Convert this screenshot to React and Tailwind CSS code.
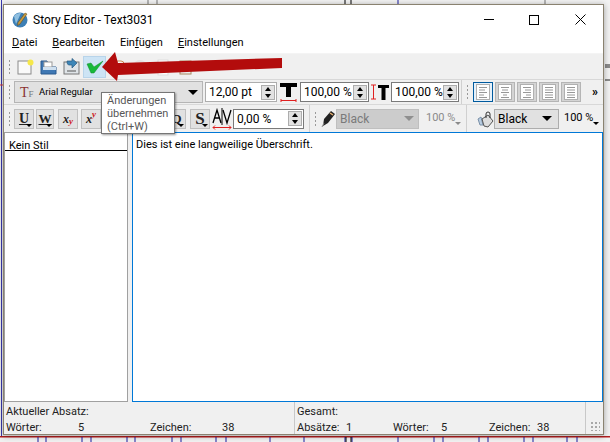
import React from 'react';

const Grip = () => (
  <div className="w-[3px] h-[16px] mx-[4px] shrink-0 bg-[radial-gradient(circle,#9a9a9a_1px,transparent_1px)] bg-[length:3px_4px]" />
);

const Spin = () => (
  <div className="w-[14px] h-[15px] ml-auto mr-[1px] shrink-0 flex flex-col items-center justify-center gap-[3px] bg-[#e1e1e1] border border-[#adadad]">
    <div className="w-0 h-0 border-x-[3.5px] border-x-transparent border-b-[4px] border-b-black" />
    <div className="w-0 h-0 border-x-[3.5px] border-x-transparent border-t-[4px] border-t-black" />
  </div>
);

const SpinInput = ({ value, className }) => (
  <div className={`h-[20px] flex items-center pl-[3px] bg-white border border-[#7a7a7a] text-[12px] text-black whitespace-nowrap ${className}`}>
    <span>{value}</span>
    <Spin />
  </div>
);

const AlignBtn = ({ lines, active, className }) => (
  <div className={`w-[20px] h-[20px] flex items-center justify-center border ${active ? 'bg-[#e5f1fb] border-[#005a9e] border-[1.5px]' : 'bg-[#d4d4d4] border-[#b5b5b5]'} ${className}`}>
    <svg width="14" height="16" viewBox="0 0 14 16">
      <rect x="0.5" y="0.5" width="13" height="15" fill="#fff" stroke="#b0b0b0" />
      {lines.map(([x1, x2], i) => (
        <line key={i} x1={x1} x2={x2} y1={3.5 + i * 2.5} y2={3.5 + i * 2.5} stroke="#8c8c8c" strokeWidth="0.9" />
      ))}
    </svg>
  </div>
);

const StyleBtn = ({ children, className, caret }) => (
  <div className={`h-[20px] flex items-center justify-center bg-[#e1e1e1] border border-[#c0c0c0] font-['Liberation_Serif',serif] font-bold text-[#222] relative ${className}`}>
    {children}
    {caret && (
      <div className="absolute right-[1px] bottom-[1px] w-0 h-0 border-x-[3px] border-x-transparent border-t-[3px] border-t-black" />
    )}
  </div>
);

const Caret = ({ color = 'border-t-black', className = '' }) => (
  <div className={`w-0 h-0 border-x-[5px] border-x-transparent border-t-[5px] ${color} ${className}`} />
);

const Divider = ({ className }) => <div className={`w-px self-stretch bg-[#d0d0d0] ${className}`} />;

function App() {
  return (
    <div className="relative w-[610px] h-[442px] overflow-hidden bg-[#f2f2f2] font-['Roboto',sans-serif]">
      {/* page behind the window, rulers and guides */}
      <svg className="absolute inset-0" width="610" height="442">
        <line x1="0" x2="610" y1="436.5" y2="436.5" stroke="#b02020" />
        <line x1="0" x2="610" y1="437.5" y2="437.5" stroke="#d88" />
        {[38, 46, 82, 91, 127, 135, 172, 181, 216, 226, 270, 304, 345, 352, 398, 434, 443, 479, 488, 524, 533, 567, 577].map((x) => (
          <line key={x} x1={x} x2={x} y1="437" y2="442" stroke="#1a1aa0" />
        ))}
        <line x1="346" x2="346" y1="437" y2="442" stroke="#000" />
        <line x1="351" x2="351" y1="437" y2="442" stroke="#000" />
        <line x1="1.5" x2="1.5" y1="0" y2="436" stroke="#3a3ab0" />
        <line x1="148" x2="148" y1="0" y2="4" stroke="#777" />
        <line x1="157" x2="157" y1="0" y2="4" stroke="#777" />
        <line x1="345" x2="345" y1="0" y2="4" stroke="#000" />
        <line x1="351" x2="351" y1="0" y2="4" stroke="#000" />
        <line x1="398" x2="398" y1="0" y2="4" stroke="#1a1aa0" />
        <line x1="545" x2="545" y1="0" y2="4" stroke="#777" />
        <line x1="605" x2="610" y1="65" y2="65" stroke="#222" />
        <line x1="605" x2="610" y1="67" y2="67" stroke="#222" />
        <line x1="605" x2="610" y1="80" y2="80" stroke="#222" />
        <line x1="0" x2="3" y1="85" y2="85" stroke="#d33" />
      </svg>

      <div className="relative ml-[3px] mt-[4px] w-[601px] h-[431px] flex flex-col bg-[#f0f0f0] border border-[#8a8270] shadow-[0_1px_6px_rgba(0,0,0,0.35)]">
        {/* title bar */}
        <div className="h-[29px] shrink-0 bg-white flex items-center text-[12px] text-black">
          <svg className="ml-[8px] mr-[5px]" width="16" height="16" viewBox="0 0 16 16">
            <circle cx="8" cy="8" r="7.5" fill="#3d7fb5" />
            <path d="M2 4 A7.5 7.5 0 0 1 9 1 L4 12 Z" fill="#8fbfe0" />
            <path d="M13 1 L15 2 L8 12 L5.5 13.5 L6 10.5 Z" fill="#c89a40" stroke="#5a4410" strokeWidth="0.5" />
          </svg>
          <span>Story Editor - Text3031</span>
          <div className="ml-auto flex items-center">
            <div className="w-[10px] h-px bg-black mr-[35px]" />
            <div className="w-[10px] h-[10px] border border-black mr-[36px]" />
            <svg className="mr-[17px]" width="11" height="11" viewBox="0 0 11 11">
              <path d="M0.5 0.5 L10.5 10.5 M10.5 0.5 L0.5 10.5" stroke="#000" />
            </svg>
          </div>
        </div>

        {/* menu */}
        <div className="h-[20px] shrink-0 bg-white flex items-center pl-[8px] gap-[15px] text-[11px] text-black border-b border-[#f4f4f4]">
          <span><u>D</u>atei</span>
          <span><u>B</u>earbeiten</span>
          <span>Ein<u>f</u>ügen</span>
          <span><u>E</u>instellungen</span>
        </div>

        {/* toolbar 1 */}
        <div className="h-[26px] shrink-0 flex items-center border-b border-[#d8d8d8]">
          <Grip />
          <svg className="ml-[2px]" width="17" height="16" viewBox="0 0 17 16">
            <rect x="1" y="2" width="13" height="13" fill="#fafafa" stroke="#8a8a8a" />
            <circle cx="13.5" cy="3.5" r="3" fill="#f6e84a" />
          </svg>
          <svg className="ml-[6px]" width="17" height="16" viewBox="0 0 17 16">
            <path d="M1 2 H7 L8 4 H11 V8 H16 V15 H1 Z" fill="#3f78b4" stroke="#2a5a90" />
            <rect x="4" y="3" width="8" height="5" fill="#fff" stroke="#999" />
            <rect x="3" y="8" width="13" height="3" fill="#cfe0f0" />
          </svg>
          <svg className="ml-[6px]" width="17" height="17" viewBox="0 0 17 17">
            <rect x="1" y="4" width="15" height="12" fill="#dfe4e8" stroke="#777" />
            <path d="M4 3 H9 V0.5 L14 5 L9 10 V7 H6 C5 7 4 6 4 3 Z" fill="#3d86b8" stroke="#2a5a80" strokeWidth="0.7" />
            <path d="M4 13 H13" stroke="#555" />
          </svg>
          <div className="ml-[3px] w-[23px] h-[22px] flex items-center justify-center bg-[#cde4f5] border border-[#b8d4ea]">
            <svg width="18" height="15" viewBox="0 0 18 15">
              <path d="M1 5 L5 4 L8 8 L17 2 L8 14 L5 14 Z" fill="#17b93a" stroke="#128a2c" strokeWidth="0.5" />
            </svg>
          </div>
          {/* greyed tools mostly hidden by the arrow */}
          <svg className="ml-[8px]" width="85" height="20" viewBox="0 0 85 20">
            <rect x="1" y="4" width="9" height="12" rx="3" fill="#fff" stroke="#c88a50" />
            <circle cx="26" cy="10" r="7" fill="#e4e4e4" />
            <rect x="44" y="3" width="10" height="15" fill="#fff" stroke="#ddd" />
            <rect x="66" y="4" width="11" height="13" fill="#eee" stroke="#a88860" />
          </svg>
        </div>

        {/* toolbar 2 */}
        <div className="h-[25px] shrink-0 flex items-center border-b border-[#d8d8d8]">
          <Grip />
          <div className="-ml-[1px] w-[189px] h-[22px] flex items-center bg-[#e1e1e1] border border-[#b5b5b5] text-[9.5px] text-black">
            <span className="ml-[5px] w-[19px] font-['Liberation_Serif',serif] text-[14px] text-[#8a3030]">T<span className="text-[9px] text-[#777]">F</span></span>
            <span>Arial Regular</span>
            <Caret className="ml-auto mr-[4px]" />
          </div>
          <SpinInput value="12,00 pt" className="ml-[2px] w-[72px] border-[#adadad]" />
          <div className="w-[23px] h-[20px] flex items-center justify-center">
            <svg width="17" height="20" viewBox="0 0 17 20">
              <path d="M0 1 H17 V5 H11 V15 H6 V5 H0 Z" fill="#000" />
              <path d="M1 17 V20 M16 17 V20 M1 18.5 H16" stroke="#e02020" fill="none" />
            </svg>
          </div>
          <SpinInput value="100,00 %" className="w-[69px]" />
          <div className="w-[22px] h-[20px] flex items-center justify-center">
            <svg width="20" height="18" viewBox="0 0 20 18">
              <path d="M1 2 H6 M3.5 2 V16 M1 16 H6" stroke="#e02020" fill="none" />
              <path d="M8 2 H19 V5 H15.5 V17 H11.5 V5 H8 Z" fill="#000" />
            </svg>
          </div>
          <SpinInput value="100,00 %" className="w-[68px]" />
          <Divider className="ml-[2px]" />
          <Grip />
          <AlignBtn active lines={[[3, 11], [3, 9], [3, 11], [3, 8], [3, 11]]} />
          <AlignBtn className="ml-[2px]" lines={[[3, 11], [4, 10], [3, 11], [5, 9], [3, 11]]} />
          <AlignBtn className="ml-[2px]" lines={[[3, 11], [5, 11], [3, 11], [6, 11], [3, 11]]} />
          <AlignBtn className="ml-[2px]" lines={[[3, 11], [3, 11], [3, 11], [3, 11], [3, 11]]} />
          <AlignBtn className="ml-[2px]" lines={[[3, 11], [3, 11], [3, 11], [3, 11], [3, 11]]} />
          <span className="ml-[11px] text-[12px] font-bold text-black leading-none">»</span>
        </div>

        {/* toolbar 3 */}
        <div className="h-[27px] shrink-0 flex items-center">
          <Grip />
          <StyleBtn caret className="-ml-[1px] w-[20px] text-[14px] underline">U</StyleBtn>
          <StyleBtn caret className="ml-[2px] w-[18px] text-[13px] underline">W</StyleBtn>
          <StyleBtn className="ml-[4px] w-[20px] text-[12px] italic">x<sub className="text-[#d02020]">y</sub></StyleBtn>
          <StyleBtn className="ml-[3px] w-[20px] text-[12px] italic">x<sup className="text-[#d02020]">y</sup></StyleBtn>
          <StyleBtn caret className="ml-[66px] w-[19px] text-[13px]">Q</StyleBtn>
          <StyleBtn caret className="ml-[4px] w-[20px] text-[17px]">S</StyleBtn>
          <svg className="ml-[2px]" width="20" height="22" viewBox="0 0 20 22">
            <path d="M1 15 L5 2 L9 15 M2.5 10 H7.5" stroke="#000" fill="none" strokeWidth="1.3" />
            <path d="M11 2 L15 15 L19 2" stroke="#000" fill="none" strokeWidth="1.3" />
            <line x1="10" x2="10" y1="0" y2="17" stroke="#000" />
            <path d="M1 19.5 H19 M3 17.5 L1 19.5 L3 21.5 M17 17.5 L19 19.5 L17 21.5" stroke="#e02020" fill="none" />
          </svg>
          <SpinInput value="0,00 %" className="ml-px w-[71px]" />
          <Divider className="ml-[5px]" />
          <Grip />
          <svg width="15" height="18" viewBox="0 0 15 18">
            <path d="M2 16 L3 9 L10 1 L14 4 L7 13 Z" fill="#222" />
            <path d="M9 3 L12 5" stroke="#e8b070" strokeWidth="1.5" />
            <path d="M1 17 L3 13" stroke="#888" />
          </svg>
          <div className="w-[83px] h-[20px] flex items-center pl-[3px] bg-[#cccccc] border border-[#bfbfbf] text-[12px] text-[#7a7a7a]">
            <span>Black</span>
            <Caret color="border-t-[#8f8f8f]" className="ml-auto mr-[4px]" />
          </div>
          <div className="ml-[7px] w-[33px] flex items-end text-[11px] text-[#8a8a8a] whitespace-nowrap">
            <span>100 %</span>
            <div className="mb-[2px] w-0 h-0 border-x-[3px] border-x-transparent border-t-[3px] border-t-[#8a8a8a]" />
          </div>
          <Divider className="ml-[7px]" />
          <svg className="ml-[10px]" width="17" height="18" viewBox="0 0 17 18">
            <path d="M1 9 L4 7 L6 15 L3 15 Z" fill="#b8cce0" stroke="#7a90a8" />
            <path d="M5 9 L11 5 L16 11 L11 17 L7 16 Z" fill="#ddd" stroke="#555" />
            <path d="M9 8 V4 A2 2 0 0 1 13 4 V8" stroke="#333" fill="none" />
          </svg>
          <div className="w-[65px] h-[20px] flex items-center pl-[3px] bg-[#e1e1e1] border border-[#adadad] text-[12px] text-black">
            <span>Black</span>
            <Caret className="ml-auto mr-[6px]" />
          </div>
          <div className="ml-[5px] flex items-end text-[11px] text-black whitespace-nowrap">
            <span>100 %</span>
            <div className="mb-[2px] w-0 h-0 border-x-[3px] border-x-transparent border-t-[3px] border-t-black" />
          </div>
        </div>

        {/* panels */}
        <div className="flex-1 min-h-0 flex">
          <div className="w-[124px] bg-white border border-[#a0a0a0] shrink-0">
            <div className="h-[17px] mt-[1px] pl-[4px] border-b border-black text-[11px] leading-[23px] text-black">Kein Stil</div>
          </div>
          <div className="ml-[4px] flex-1 bg-white border border-[#0078d7] pl-[3px] pt-[4px] text-[11px] text-black">
            Dies ist eine langweilige Überschrift.
          </div>
        </div>

        {/* status bar */}
        <div className="h-[32px] shrink-0 flex text-[11px] text-[#222] leading-[16px]">
          <div className="w-[291px] pl-[2px] pt-[2px] border-r border-[#c8c8c8]">
            <div>Aktueller Absatz:</div>
            <div className="flex">
              <span className="w-[72px]">Wörter:</span>
              <span className="w-[72px]">5</span>
              <span className="w-[72px]">Zeichen:</span>
              <span>38</span>
            </div>
          </div>
          <div className="w-[291px] pl-[2px] pt-[2px] border-r border-[#c8c8c8]">
            <div>Gesamt:</div>
            <div className="flex">
              <span className="w-[49px]">Absätze:</span>
              <span className="w-[47px]">1</span>
              <span className="w-[48px]">Wörter:</span>
              <span className="w-[48px]">5</span>
              <span className="w-[48px]">Zeichen:</span>
              <span>38</span>
            </div>
          </div>
          <div className="flex-1 flex items-end justify-end pr-[3px] pb-[3px]">
            <div className="w-[10px] h-[10px] bg-[radial-gradient(circle,#a8a8a8_1px,transparent_1px)] bg-[length:4px_4px]" />
          </div>
        </div>
      </div>

      {/* annotation arrow */}
      <svg className="absolute left-[100px] top-[50px]" width="185" height="34" viewBox="0 0 185 34">
        <path d="M2 17 L15 2 L18 13 L182 8 L182 18 L18 25 L17 31 Z" fill="#b30c0c" />
      </svg>

      {/* tooltip */}
      <div className="absolute left-[101px] top-[92px] w-[74px] h-[42px] px-[5px] pt-[1px] bg-white border border-[#767676] shadow-[1px_1px_2px_rgba(0,0,0,0.4)] text-[11px] leading-[13px] text-[#575757]">
        <div>Änderungen</div>
        <div>übernehmen</div>
        <div>(Ctrl+W)</div>
      </div>
    </div>
  );
}

export default App;
